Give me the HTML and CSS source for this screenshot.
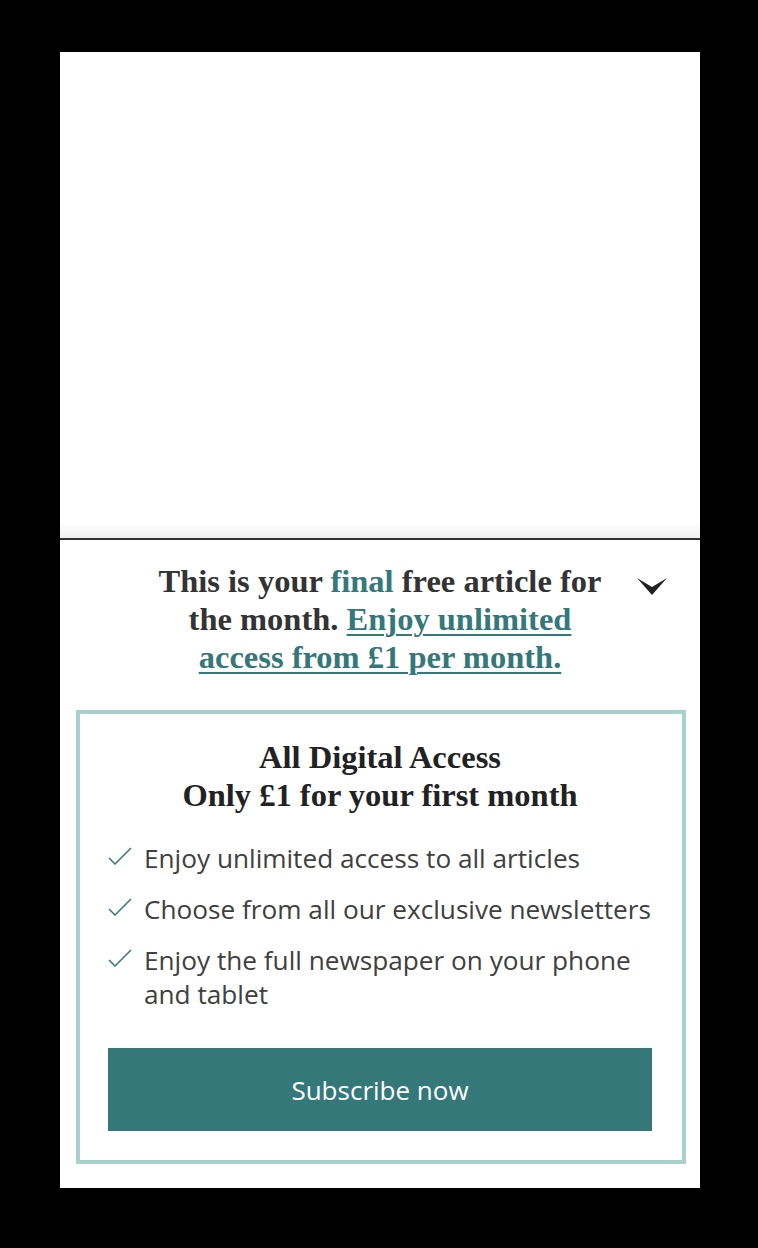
FILE: index.html
```html
<!DOCTYPE html>
<html lang="en">
<head>
<meta charset="utf-8">
<title>Subscribe</title>
<link rel="stylesheet" href="styles.css">
</head>
<body>
<div class="card">
  <div class="article"></div>
  <section class="panel">
    <div class="headline-row">
      <p class="headline">This is your <span class="accent">final</span> free article for the month. <a class="headline-link" href="#">Enjoy unlimited access from £1 per month.</a></p>
      <button class="toggle" aria-label="Collapse">
        <svg width="30" height="17" viewBox="0 0 30 17"><path d="M0 0 L15 9 L30 0 L15 17 Z" fill="#222"/></svg>
      </button>
    </div>
    <div class="offer">
      <h2 class="offer-title">All Digital Access<br>Only £1 for your first month</h2>
      <ul class="benefits">
        <li class="benefit"><svg class="tick" width="24" height="18" viewBox="0 0 24 18"><path d="M1 11 L7 17 L23 1" fill="none" stroke="#35787a" stroke-width="1.5"/></svg><span>Enjoy unlimited access to all articles</span></li>
        <li class="benefit"><svg class="tick" width="24" height="18" viewBox="0 0 24 18"><path d="M1 11 L7 17 L23 1" fill="none" stroke="#35787a" stroke-width="1.5"/></svg><span>Choose from all our exclusive newsletters</span></li>
        <li class="benefit"><svg class="tick" width="24" height="18" viewBox="0 0 24 18"><path d="M1 11 L7 17 L23 1" fill="none" stroke="#35787a" stroke-width="1.5"/></svg><span>Enjoy the full newspaper on your phone and tablet</span></li>
      </ul>
      <a class="subscribe" href="#">Subscribe now</a>
    </div>
  </section>
</div>
</body>
</html>
```
FILE: styles.css
```css
html, body {
  margin: 0;
  padding: 0;
  background: #000;
}
body {
  width: 758px;
  height: 1248px;
  padding-top: 52px;
  box-sizing: border-box;
}
.card {
  margin-left: 60px;
  width: 640px;
  height: 1136px;
  background: #fff;
  display: flex;
  flex-direction: column;
}
.article {
  flex: none;
  height: 486px;
  background: linear-gradient(to bottom, #fff 0, #fff calc(100% - 16px), #f1f1f1 100%);
}
.panel {
  flex: none;
  border-top: 2px solid #333;
  padding-top: 22px;
}
.headline-row {
  position: relative;
  display: flex;
  justify-content: center;
}
.headline {
  margin: 0;
  width: 462px;
  text-align: center;
  font-family: "Liberation Serif", "DejaVu Serif", serif;
  font-weight: 700;
  font-size: 32.5px;
  line-height: 38px;
  color: #333;
}
.accent {
  color: #35787a;
}
.headline-link {
  color: #35787a;
  text-decoration: underline;
  text-decoration-thickness: 2px;
  text-underline-offset: 4px;
}
.toggle {
  position: absolute;
  right: 33px;
  top: 16px;
  padding: 0;
  border: 0;
  background: none;
  line-height: 0;
}
.offer {
  margin: 34px 0 0 16px;
  width: 610px;
  box-sizing: border-box;
  border: 4px solid #a9d1cb;
  padding: 24px 30px 29px 28px;
}
.offer-title {
  margin: 0;
  text-align: center;
  font-family: "Liberation Serif", "DejaVu Serif", serif;
  font-weight: 700;
  font-size: 32.5px;
  line-height: 38px;
  color: #222;
}
.benefits {
  list-style: none;
  margin: 27px -10px 0 0;
  padding: 0;
  display: flex;
  flex-direction: column;
  gap: 17px;
}
.benefit {
  display: flex;
  align-items: flex-start;
  gap: 12px;
  font-family: "Open Sans", "Noto Sans", sans-serif;
  font-size: 26.2px;
  line-height: 34px;
  color: #404040;
}
.tick {
  flex: none;
  margin-top: 6px;
}
.subscribe {
  display: flex;
  align-items: center;
  justify-content: center;
  margin-top: 37px;
  height: 83px;
  background: #35787a;
  color: #fff;
  text-decoration: none;
  font-family: "Open Sans", "Noto Sans", sans-serif;
  font-size: 26px;
}
```
